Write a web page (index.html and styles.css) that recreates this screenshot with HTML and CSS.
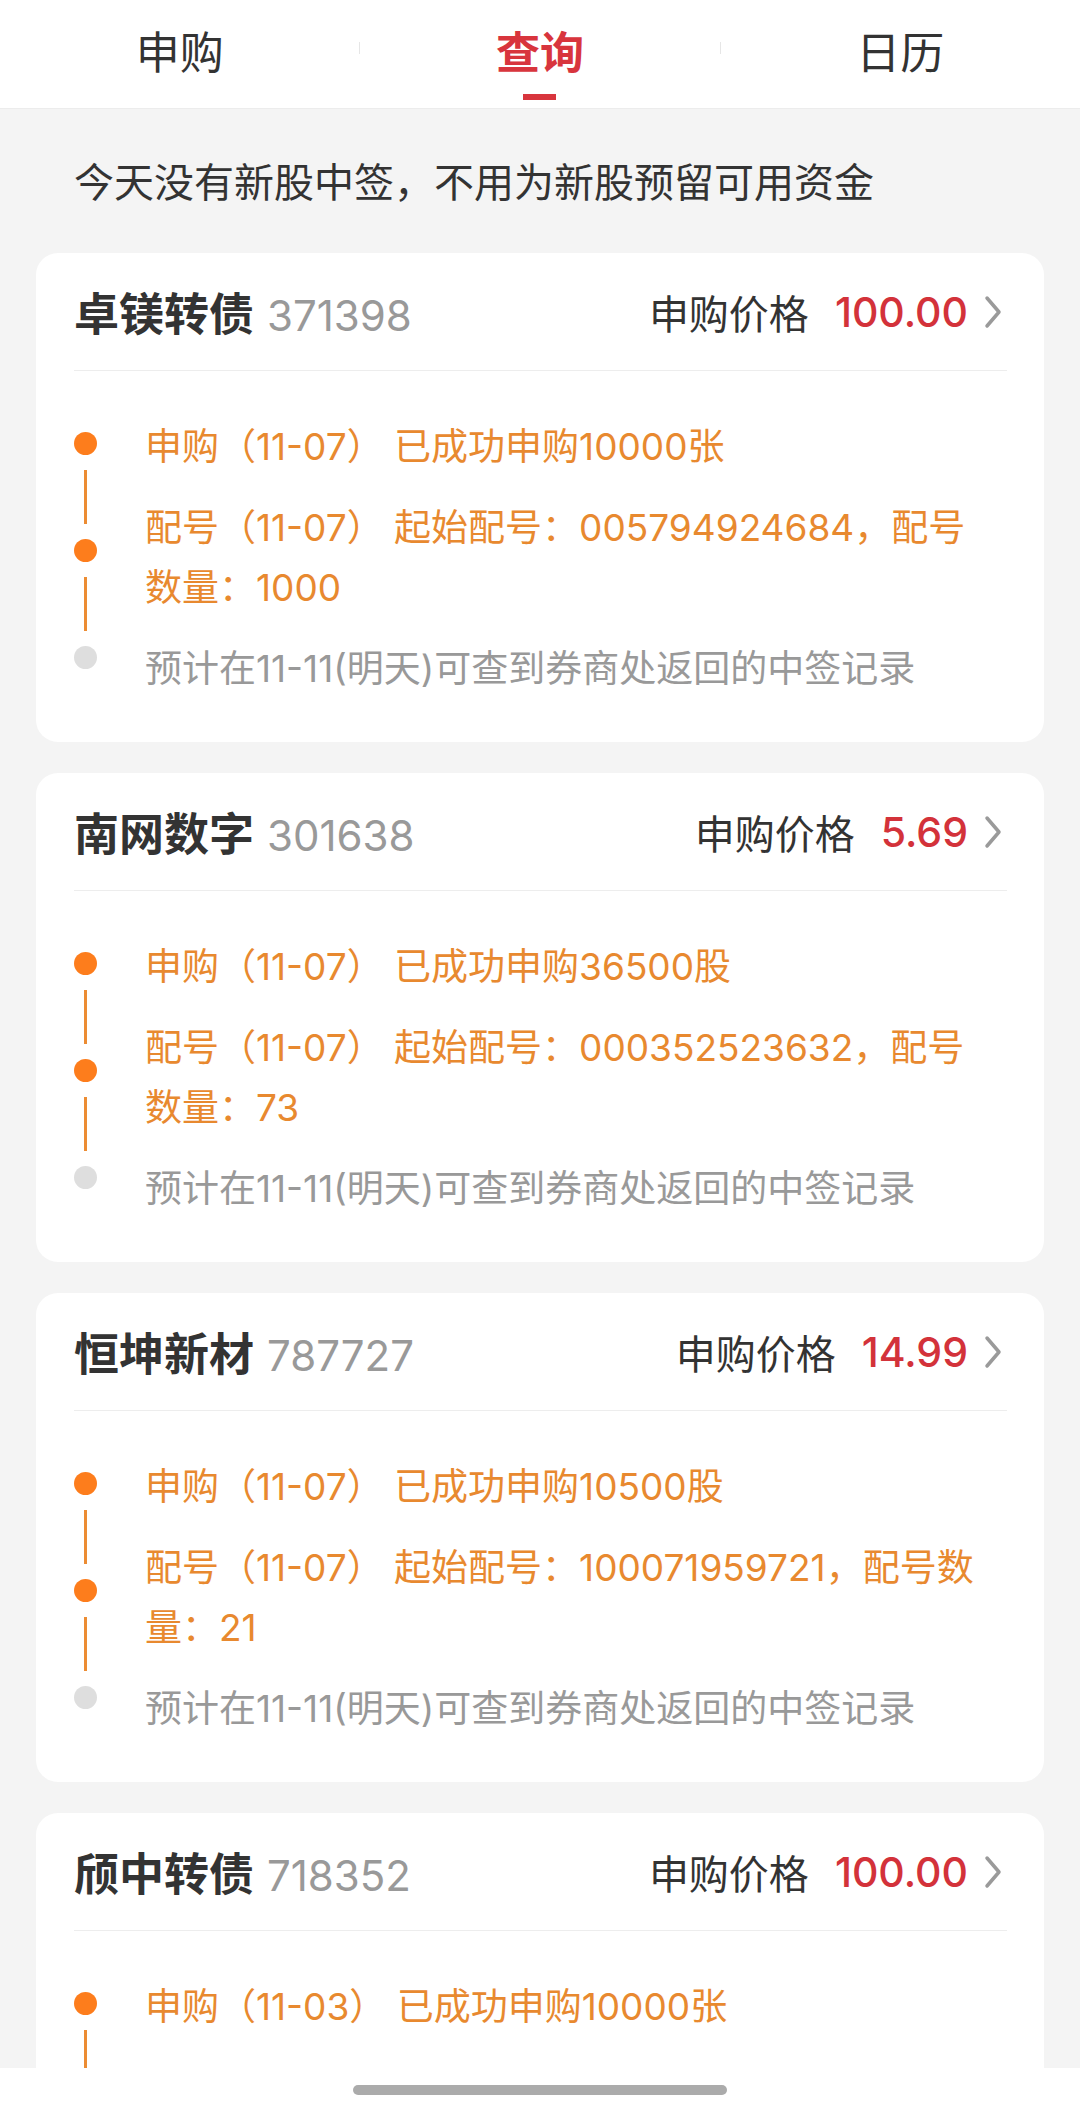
FILE: index.html
```html
<!DOCTYPE html>
<html lang="zh-CN">
<head>
    <meta charset="UTF-8">
    <meta name="viewport" content="width=device-width, initial-scale=1.0">
    <title>新股查询</title>
    <link rel="stylesheet" href="styles.css">
</head>
<body>
    <div class="tabs">
        <div class="tab">申购</div>
        <div class="sep"></div>
        <div class="tab active">查询<span class="underline"></span></div>
        <div class="sep"></div>
        <div class="tab">日历</div>
    </div>

    <div class="notice">今天没有新股中签，不用为新股预留可用资金</div>

    <div class="list">
        <div class="card">
            <div class="card-head">
                <div class="name">卓镁转债<span class="code">371398</span></div>
                <div class="price-label">申购价格</div>
                <div class="price">100.00</div>
                <svg class="chevron" width="20" height="34" viewBox="0 0 20 34"><path d="M4 3 L16 17 L4 31" /></svg>
            </div>
            <div class="timeline">
                <div class="rail">
                    <span class="dot"></span><span class="seg"></span>
                    <span class="dot"></span><span class="seg"></span>
                    <span class="dot gray"></span>
                </div>
                <div class="steps">
                    <div class="step">申购（11-07） 已成功申购10000张</div>
                    <div class="step">配号（11-07） 起始配号：005794924684，配号数量：1000</div>
                    <div class="step pending">预计在11-11(明天)可查到券商处返回的中签记录</div>
                </div>
            </div>
        </div>

        <div class="card">
            <div class="card-head">
                <div class="name">南网数字<span class="code">301638</span></div>
                <div class="price-label">申购价格</div>
                <div class="price">5.69</div>
                <svg class="chevron" width="20" height="34" viewBox="0 0 20 34"><path d="M4 3 L16 17 L4 31" /></svg>
            </div>
            <div class="timeline">
                <div class="rail">
                    <span class="dot"></span><span class="seg"></span>
                    <span class="dot"></span><span class="seg"></span>
                    <span class="dot gray"></span>
                </div>
                <div class="steps">
                    <div class="step">申购（11-07） 已成功申购36500股</div>
                    <div class="step">配号（11-07） 起始配号：000352523632，配号数量：73</div>
                    <div class="step pending">预计在11-11(明天)可查到券商处返回的中签记录</div>
                </div>
            </div>
        </div>

        <div class="card">
            <div class="card-head">
                <div class="name">恒坤新材<span class="code">787727</span></div>
                <div class="price-label">申购价格</div>
                <div class="price">14.99</div>
                <svg class="chevron" width="20" height="34" viewBox="0 0 20 34"><path d="M4 3 L16 17 L4 31" /></svg>
            </div>
            <div class="timeline">
                <div class="rail">
                    <span class="dot"></span><span class="seg"></span>
                    <span class="dot"></span><span class="seg"></span>
                    <span class="dot gray"></span>
                </div>
                <div class="steps">
                    <div class="step">申购（11-07） 已成功申购10500股</div>
                    <div class="step">配号（11-07） 起始配号：100071959721，配号数量：21</div>
                    <div class="step pending">预计在11-11(明天)可查到券商处返回的中签记录</div>
                </div>
            </div>
        </div>

        <div class="card">
            <div class="card-head">
                <div class="name">颀中转债<span class="code">718352</span></div>
                <div class="price-label">申购价格</div>
                <div class="price">100.00</div>
                <svg class="chevron" width="20" height="34" viewBox="0 0 20 34"><path d="M4 3 L16 17 L4 31" /></svg>
            </div>
            <div class="timeline">
                <div class="rail">
                    <span class="dot"></span><span class="seg"></span>
                    <span class="dot"></span>
                </div>
                <div class="steps">
                    <div class="step">申购（11-03） 已成功申购10000张</div>
                    <div class="step">配号（11-03）</div>
                </div>
            </div>
        </div>
    </div>

    <div class="home-bar"><span class="pill"></span></div>
</body>
</html>
```

FILE: styles.css
```css
html, body {
    margin: 0;
    height: 2111px;
    overflow: hidden;
}
body {
    background: #f4f4f4;
    font-family: Inter, "Noto Sans CJK SC", sans-serif;
    color: #333;
}
.tabs {
    display: flex;
    align-items: flex-start;
    height: 108px;
    background: #fff;
    border-bottom: 1px solid #ececec;
}
.tab {
    flex: 1;
    display: flex;
    flex-direction: column;
    align-items: center;
    padding-top: 26px;
    font-size: 44px;
    line-height: 54px;
    color: #333;
}
.tab.active {
    color: #d8353d;
    font-weight: 700;
}
.underline {
    width: 33px;
    height: 6px;
    margin-top: 14px;
    background: #d8353d;
}
.sep {
    width: 1px;
    height: 12px;
    margin-top: 42px;
    background: #e6e6e6;
}
.notice {
    padding: 46px 74px 42px;
    font-size: 40px;
    line-height: 56px;
    color: #333;
}
.list {
    display: flex;
    flex-direction: column;
    gap: 31px;
    padding: 0 36px;
}
.card {
    background: #fff;
    border-radius: 22px;
    padding: 0 37px 0 38px;
}
.card-head {
    display: flex;
    align-items: center;
    height: 117px;
    border-bottom: 1px solid #ededed;
}
.name {
    flex: 1;
    font-size: 45px;
    font-weight: 700;
    color: #333;
}
.code {
    margin-left: 13px;
    font-size: 42px;
    font-weight: 400;
    color: #999;
}
.price-label {
    font-size: 40px;
    color: #333;
}
.price {
    margin-left: 26px;
    font-size: 41px;
    font-weight: 500;
    color: #d3323a;
}
.chevron {
    margin-left: 15px;
    margin-right: 4px;
}
.chevron path {
    fill: none;
    stroke: #9a9a9a;
    stroke-width: 3.5;
    stroke-linecap: round;
    stroke-linejoin: round;
}
.timeline {
    display: flex;
    align-items: flex-start;
    padding: 46px 22px 43px 0;
}
.rail {
    width: 23px;
    display: flex;
    flex-direction: column;
    align-items: center;
    margin-top: 15px;
    margin-right: 48px;
}
.dot {
    width: 23px;
    height: 23px;
    border-radius: 50%;
    background: #fd7d1c;
}
.dot.gray {
    background: #dedede;
}
.seg {
    width: 3px;
    height: 54px;
    margin: 15px 0;
    background: #ec8c33;
}
.steps {
    flex: 1;
    display: flex;
    flex-direction: column;
    gap: 21px;
}
.step {
    font-size: 37px;
    line-height: 60px;
    color: #e8892f;
}
.step.pending {
    color: #999;
}
.home-bar {
    position: fixed;
    left: 0;
    right: 0;
    bottom: 0;
    height: 43px;
    background: #fff;
    display: flex;
    justify-content: center;
    padding-top: 17px;
    box-sizing: border-box;
}
.pill {
    width: 374px;
    height: 10px;
    border-radius: 5px;
    background: #ababab;
}
```
